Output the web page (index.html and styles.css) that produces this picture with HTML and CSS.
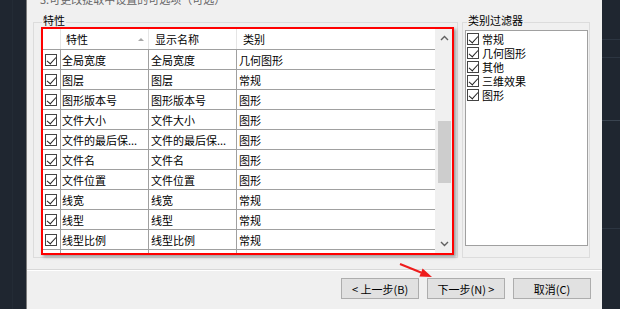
FILE: index.html
```html
<!DOCTYPE html>
<html lang="zh-CN">
<head>
    <meta charset="UTF-8">
    <title>数据提取 - 选择特性</title>
    <link rel="stylesheet" href="styles.css">
</head>
<body>
    <div class="screen">
        <div class="cad cad-left"></div>

        <div class="dialog">
            <div class="intro"><p>3.可更改提取中设置的可选项（可选）</p></div>

            <div class="panels">
                <section class="group group-props">
                    <h2 class="group-title">特性</h2>
                    <div class="highlight">
                        <div class="list">
                            <div class="grid">
                                <div class="row head">
                                    <span class="cell c-chk"></span>
                                    <span class="cell c-name">特性<i class="sort"></i></span>
                                    <span class="cell c-disp">显示名称</span>
                                    <span class="cell c-cat">类别</span>
                                </div>
                                <div class="row"><span class="cell c-chk"><i class="chk"></i></span><span class="cell c-name">全局宽度</span><span class="cell c-disp">全局宽度</span><span class="cell c-cat">几何图形</span></div>
                                <div class="row"><span class="cell c-chk"><i class="chk"></i></span><span class="cell c-name">图层</span><span class="cell c-disp">图层</span><span class="cell c-cat">常规</span></div>
                                <div class="row"><span class="cell c-chk"><i class="chk"></i></span><span class="cell c-name">图形版本号</span><span class="cell c-disp">图形版本号</span><span class="cell c-cat">图形</span></div>
                                <div class="row"><span class="cell c-chk"><i class="chk"></i></span><span class="cell c-name">文件大小</span><span class="cell c-disp">文件大小</span><span class="cell c-cat">图形</span></div>
                                <div class="row"><span class="cell c-chk"><i class="chk"></i></span><span class="cell c-name">文件的最后保...</span><span class="cell c-disp">文件的最后保...</span><span class="cell c-cat">图形</span></div>
                                <div class="row"><span class="cell c-chk"><i class="chk"></i></span><span class="cell c-name">文件名</span><span class="cell c-disp">文件名</span><span class="cell c-cat">图形</span></div>
                                <div class="row"><span class="cell c-chk"><i class="chk"></i></span><span class="cell c-name">文件位置</span><span class="cell c-disp">文件位置</span><span class="cell c-cat">图形</span></div>
                                <div class="row"><span class="cell c-chk"><i class="chk"></i></span><span class="cell c-name">线宽</span><span class="cell c-disp">线宽</span><span class="cell c-cat">常规</span></div>
                                <div class="row"><span class="cell c-chk"><i class="chk"></i></span><span class="cell c-name">线型</span><span class="cell c-disp">线型</span><span class="cell c-cat">常规</span></div>
                                <div class="row"><span class="cell c-chk"><i class="chk"></i></span><span class="cell c-name">线型比例</span><span class="cell c-disp">线型比例</span><span class="cell c-cat">常规</span></div>
                                <div class="row"><span class="cell c-chk"><i class="chk"></i></span><span class="cell c-name">颜色</span><span class="cell c-disp">颜色</span><span class="cell c-cat">常规</span></div>
                            </div>
                            <div class="vscroll">
                                <span class="arrow">
                                    <svg width="9" height="6" viewBox="0 0 9 6"><polyline points="1,5 4.5,1.5 8,5" fill="none" stroke="#606060" stroke-width="1.4"/></svg>
                                </span>
                                <span class="track"><span class="thumb"></span></span>
                                <span class="arrow">
                                    <svg width="9" height="6" viewBox="0 0 9 6"><polyline points="1,1 4.5,4.5 8,1" fill="none" stroke="#606060" stroke-width="1.4"/></svg>
                                </span>
                            </div>
                        </div>
                    </div>
                </section>

                <section class="group group-filter">
                    <h2 class="group-title">类别过滤器</h2>
                    <ul class="filter-list">
                        <li><i class="chk"></i>常规</li>
                        <li><i class="chk"></i>几何图形</li>
                        <li><i class="chk"></i>其他</li>
                        <li><i class="chk"></i>三维效果</li>
                        <li><i class="chk"></i>图形</li>
                    </ul>
                </section>
            </div>

            <div class="sep"></div>

            <div class="actions">
                <button type="button">&lt; 上一步(B)</button>
                <button type="button">下一步(N) &gt;</button>
                <button type="button">取消(C)</button>
            </div>
        </div>

        <div class="cad cad-right"></div>
    </div>

    <!-- 红色标注箭头 -->
    <svg class="callout" width="42" height="22" viewBox="0 0 42 22">
        <line x1="5" y1="4" x2="26" y2="12.5" stroke="#ee1c1c" stroke-width="2"/>
        <polygon points="37,17 24.4,16.4 27.6,8.6" fill="#ee1c1c"/>
    </svg>
</body>
</html>
```

FILE: styles.css
```css
* {
    box-sizing: border-box;
}
body {
    margin: 0;
    width: 620px;
    height: 309px;
    overflow: hidden;
    font-family: "Noto Sans CJK SC", "Microsoft YaHei", sans-serif;
    font-size: 11px;
    color: #000;
}
.screen {
    display: flex;
    height: 309px;
}

/* CAD 背景 */
.cad {
    background-color: #1f2630;
}
.cad-left {
    width: 26px;
    background-image: linear-gradient(90deg, transparent 12px, #232b35 12px, #232b35 13px, transparent 13px);
}
.cad-right {
    width: 18px;
    background-image:
        linear-gradient(180deg, transparent 39px, #2c3541 39px, #2c3541 40px, transparent 40px),
        linear-gradient(180deg, transparent 57px, #2c3541 57px, #2c3541 58px, transparent 58px),
        linear-gradient(180deg, transparent 120px, #3a4450 120px, #3a4450 121px, transparent 121px),
        linear-gradient(180deg, transparent 228px, #2c3541 228px, #2c3541 229px, transparent 229px);
}

/* 对话框 */
.dialog {
    width: 576px;
    background-color: #f0f0f0;
    border-left: 1px solid #7d7d7d;
}
.intro {
    height: 8px;
    overflow: hidden;
}
.intro p {
    margin: -9px 0 0 13px;
    line-height: 16px;
    color: #666;
}
.panels {
    display: flex;
    gap: 4px;
    margin-top: 14px;
    padding: 0 11px 0 6px;
}
.group {
    border: 1px solid #dcdcdc;
    margin: 0;
}
.group-title {
    width: fit-content;
    margin: -9px 0 0 1px;
    padding: 0 1px;
    background-color: #f0f0f0;
    font-size: 11px;
    font-weight: normal;
    line-height: 12px;
}
.group-props {
    width: 425px;
    padding: 0 0 2px 7px;
}
.group-filter {
    width: 128px;
    padding: 0 1px 11px 2px;
}
.group-filter .group-title {
    margin-left: 2px;
}

/* 红框标注 */
.highlight {
    width: 413px;
    margin-top: 1px;
    border: 2px solid #ff0000;
    box-shadow: 2px 2px 3px rgba(0, 0, 0, 0.35);
}
.list {
    display: flex;
    height: 224px;
    overflow: hidden;
    background-color: #fff;
}
.grid {
    width: 392px;
    height: 100%;
    overflow: hidden;
}
.row {
    display: flex;
    height: 20px;
    border-bottom: 1px solid #a0a0a0;
}
.row.head {
    height: 21px;
}
.cell {
    display: flex;
    align-items: center;
    height: 100%;
    border-right: 1px solid #a0a0a0;
    padding-left: 2px;
    white-space: nowrap;
    overflow: hidden;
}
.head .cell {
    border-right-color: #e5e5e5;
    padding-left: 6px;
}
.c-chk {
    width: 18px;
}
.c-name {
    width: 88px;
    padding-left: 1px;
}
.c-disp {
    width: 88px;
}
.c-cat {
    width: 198px;
    border-right: none;
}
.head .c-name {
    justify-content: space-between;
    padding-left: 5px;
    padding-right: 4px;
}
.sort {
    width: 0;
    height: 0;
    border-left: 3px solid transparent;
    border-right: 3px solid transparent;
    border-bottom: 3px solid #a8a8a8;
}

/* 复选框 */
.chk {
    position: relative;
    display: block;
    flex: none;
    width: 12px;
    height: 12px;
    border: 1px solid #444;
    background-color: #fff;
}
.chk::after {
    content: "";
    position: absolute;
    left: 3px;
    top: 0;
    width: 4px;
    height: 8px;
    border-right: 1.2px solid #222;
    border-bottom: 1.2px solid #222;
    transform: rotate(42deg);
}

/* 滚动条 */
.vscroll {
    display: flex;
    flex-direction: column;
    width: 17px;
    background-color: #f0f0f0;
}
.arrow {
    display: flex;
    align-items: center;
    justify-content: center;
    height: 18px;
    padding-left: 1px;
}
.track {
    flex: 1;
    padding: 74px 1px 0 3px;
}
.thumb {
    display: block;
    height: 62px;
    background-color: #cdcdcd;
}

/* 类别过滤器 */
.filter-list {
    list-style: none;
    height: 216px;
    margin: 4px 0 0;
    padding: 1px 0 0 1px;
    background-color: #fff;
    border: 1px solid #a0a0a0;
}
.filter-list li {
    display: flex;
    align-items: center;
    gap: 3px;
    height: 14px;
    line-height: 14px;
}

/* 分隔线与按钮 */
.sep {
    margin-top: 11px;
    border-top: 1px solid #d8d8d8;
    border-bottom: 1px solid #fff;
}
.actions {
    display: flex;
    justify-content: flex-end;
    gap: 8px;
    margin-top: 7px;
    padding-right: 11px;
}
.actions button {
    width: 78px;
    height: 21px;
    padding: 0;
    font-family: inherit;
    font-size: 11px;
    color: #000;
    background-color: #e1e1e1;
    border: 1px solid #adadad;
}

.callout {
    position: absolute;
    left: 395px;
    top: 260px;
}
```
